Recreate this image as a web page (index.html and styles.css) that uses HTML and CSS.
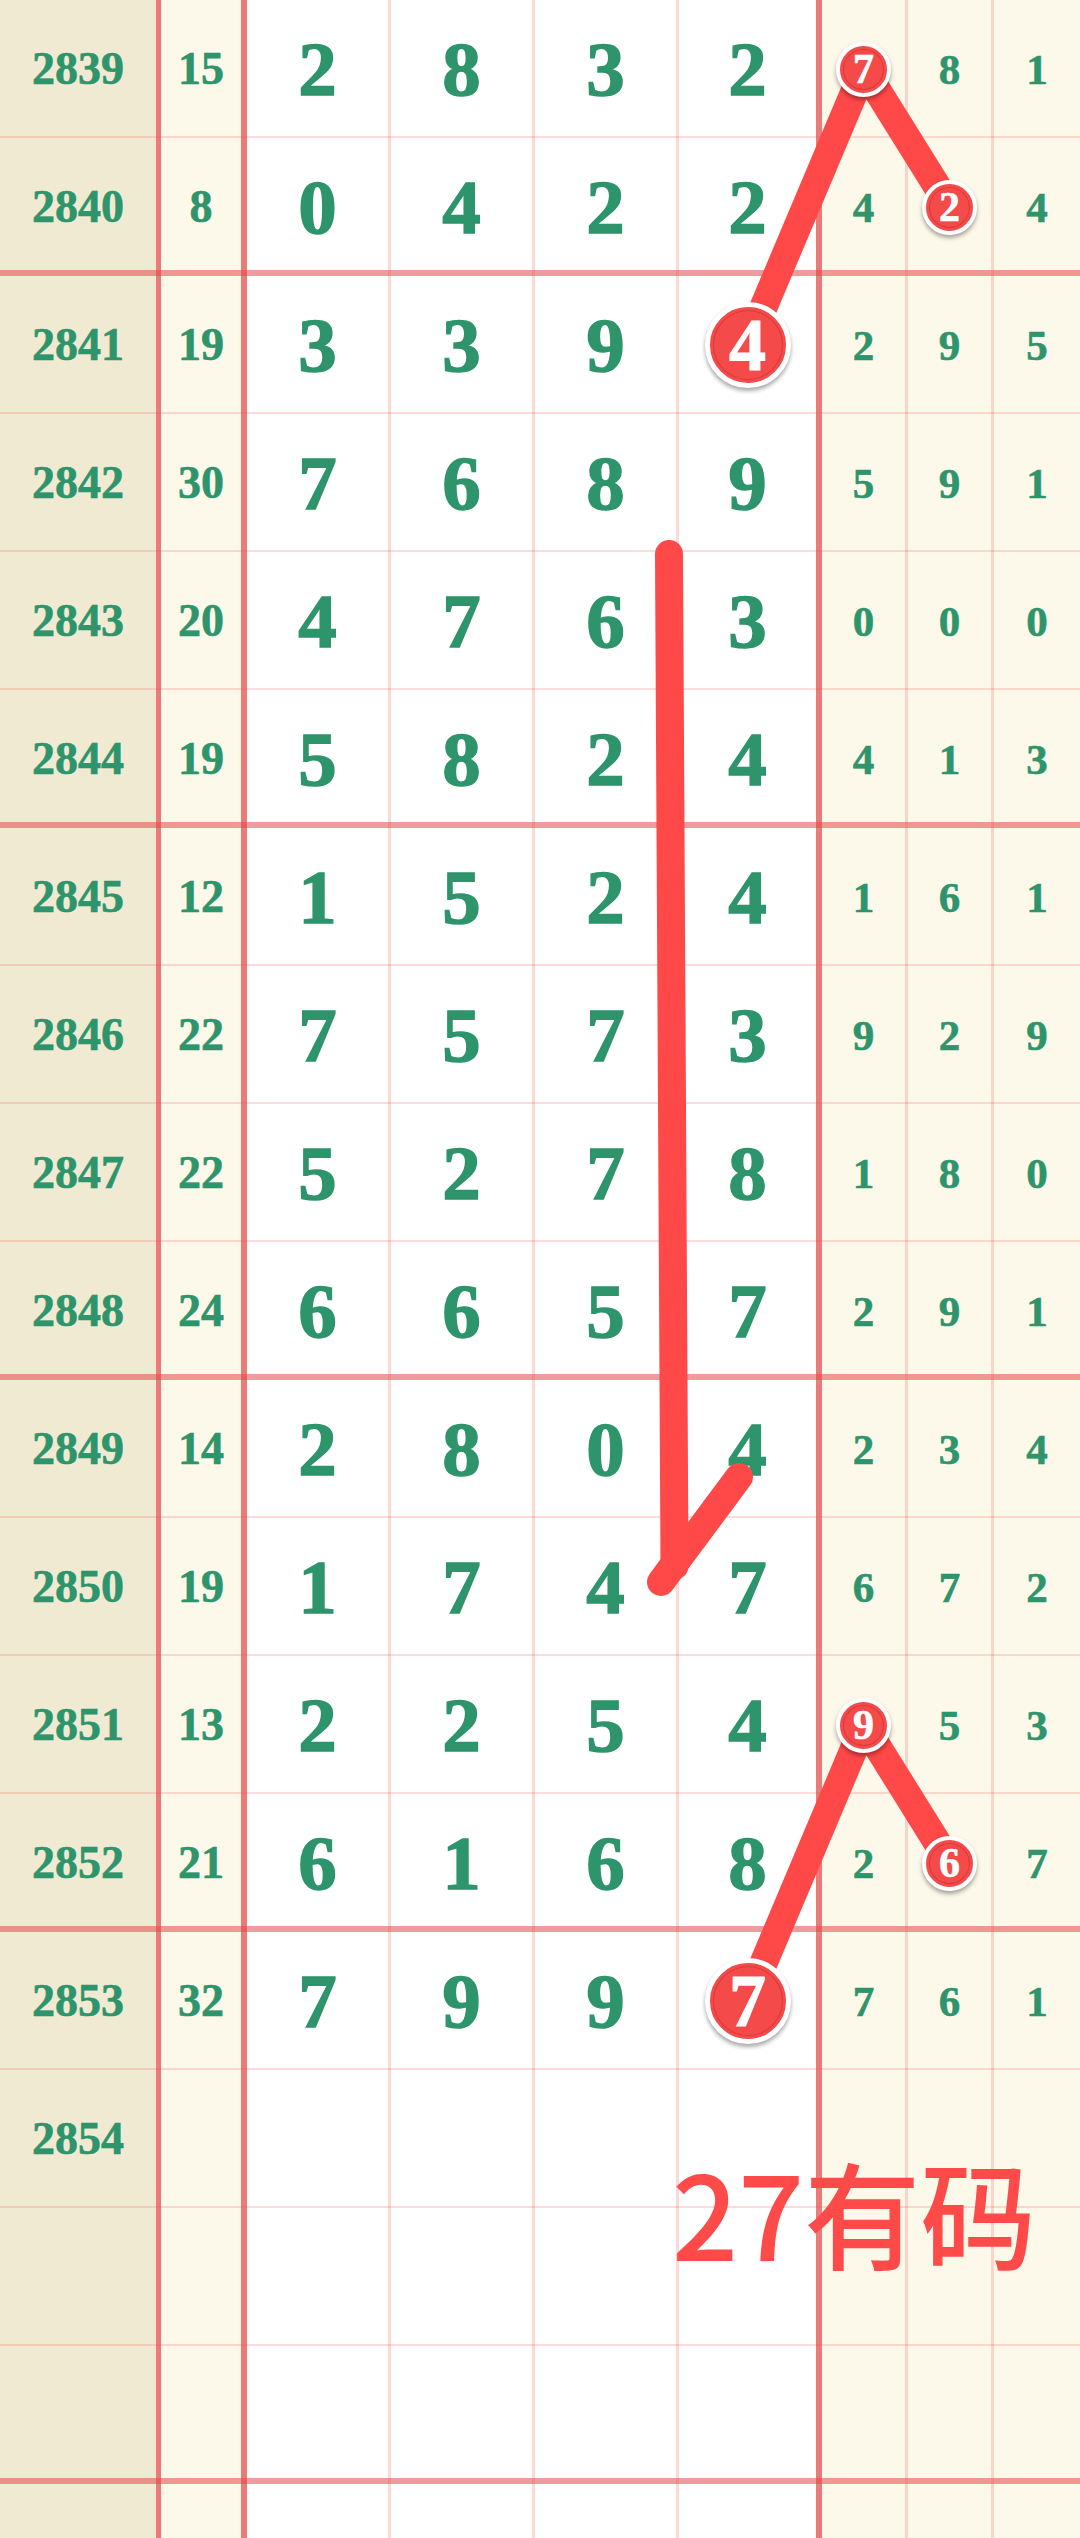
FILE: index.html
```html
<!DOCTYPE html>
<html lang="zh-CN">
<head>
    <meta charset="UTF-8">
    <meta name="viewport" content="width=device-width, initial-scale=1.0">
    <title>走势图</title>
    <link rel="stylesheet" href="styles.css">
</head>
<body>

    <div class="chart">
        <div class="table" id="table"></div>

        <svg class="trend" width="1080" height="2538" viewBox="0 0 1080 2538">
            <polyline points="747.5,345 864,69 950,207" />
            <polyline points="747.5,2001 864,1725 950,1863" />
            <path class="hand" d="M669 554 L674.5 1566" />
            <path class="hand" d="M661 1582 L739 1477" />
        </svg>

        <div class="note">27有码</div>
    </div>

    <script>
        // issue, sum, four main digits, three tail digits
        let draws = [
            ["2839", "15", "2832", "781"],
            ["2840", "8", "0422", "424"],
            ["2841", "19", "3394", "295"],
            ["2842", "30", "7689", "591"],
            ["2843", "20", "4763", "000"],
            ["2844", "19", "5824", "413"],
            ["2845", "12", "1524", "161"],
            ["2846", "22", "7573", "929"],
            ["2847", "22", "5278", "180"],
            ["2848", "24", "6657", "291"],
            ["2849", "14", "2804", "234"],
            ["2850", "19", "1747", "672"],
            ["2851", "13", "2254", "953"],
            ["2852", "21", "6168", "267"],
            ["2853", "32", "7997", "761"],
            ["2854", "", "", ""],
            ["", "", "", ""],
            ["", "", "", ""],
            ["", "", "", ""]
        ];

        // circled numbers: "row-col"
        let balls = { "0-6": "ball", "1-7": "ball", "2-5": "ball big", "12-6": "ball", "13-7": "ball", "14-5": "ball big" };

        let table = document.getElementById("table");

        draws.forEach(function(draw, i) {
            let row = document.createElement("div");
            row.className = i % 4 === 1 ? "row group-end" : "row";

            let main = draw[2] ? draw[2].split("") : ["", "", "", ""];
            let tail = draw[3] ? draw[3].split("") : ["", "", ""];
            let values = [draw[0], draw[1]].concat(main, tail);

            values.forEach(function(value, j) {
                let cell = document.createElement("div");
                if (j === 0) cell.className = "cell issue";
                else if (j === 1) cell.className = "cell sum";
                else if (j < 6) cell.className = j === 5 ? "cell num last" : "cell num";
                else cell.className = "cell tail";

                let ball = balls[i + "-" + j];
                if (ball) {
                    let span = document.createElement("span");
                    span.className = ball;
                    span.textContent = value;
                    cell.appendChild(span);
                } else {
                    cell.textContent = value;
                }
                row.appendChild(cell);
            });

            table.appendChild(row);
        });
    </script>

</body>
</html>
```

FILE: styles.css
```css
body {
    margin: 0;
    background: #ffffff;
    font-family: "Liberation Serif", "Times New Roman", serif;
    overflow: hidden;
}

.chart {
    position: relative;
    width: 1080px;
    height: 2538px;
    overflow: hidden;
}

.row {
    position: relative;
    display: grid;
    grid-template-columns: 161px 86px 144px 144px 144px 143px 86px 86px 86px;
    height: 138px;
}

/* row separators */
.row::after {
    content: "";
    position: absolute;
    left: 0;
    right: 0;
    bottom: -1px;
    height: 3px;
    background: rgba(235, 80, 80, 0.2);
}

.row.group-end::after {
    bottom: 0;
    height: 6px;
    background: rgba(228, 72, 72, 0.55);
}

.cell {
    display: flex;
    align-items: center;
    justify-content: center;
    line-height: 1;
    color: #2d946b;
    font-weight: bold;
    -webkit-text-stroke: 0.6px #2d946b;
    border-right: 3px solid rgba(235, 80, 80, 0.22);
}

.cell.issue {
    background: #f1ead3;
    border-right: 5px solid #eb7a78;
    font-size: 46px;
}

.cell.sum {
    background: #fdf9ea;
    border-right: 6px solid #eb7a78;
    font-size: 46px;
}

.cell.num {
    background: #ffffff;
    font-size: 77px;
    -webkit-text-stroke: 1.4px #2d946b;
}

.cell.num.last {
    border-right: 6px solid #eb7a78;
}

.cell.tail {
    background: #fdf9ea;
    font-size: 43px;
}

.cell.tail:last-child {
    border-right: none;
}

.ball {
    position: relative;
    z-index: 2;
    display: flex;
    align-items: center;
    justify-content: center;
    width: 47px;
    height: 47px;
    border: 4px solid #ffffff;
    border-radius: 50%;
    background: #f44a4a;
    color: #ffffff;
    -webkit-text-stroke: 0.6px #ffffff;
    font-size: 42px;
    box-shadow: inset 0 0 0 3px #f44a4a, inset 0 0 0 4px #d93a3a, 0 3px 4px rgba(0, 0, 0, 0.35);
}

.ball.big {
    width: 76px;
    height: 76px;
    border-width: 5px;
    font-size: 74px;
    -webkit-text-stroke: 1.2px #ffffff;
}

.trend {
    position: absolute;
    left: 0;
    top: 0;
    z-index: 1;
    pointer-events: none;
}

.trend polyline,
.trend path {
    fill: none;
    stroke: #ff4848;
    stroke-width: 28;
    stroke-linejoin: round;
}

.trend .hand {
    stroke-linecap: round;
}

.note {
    position: absolute;
    left: 672px;
    top: 2152px;
    z-index: 3;
    font-family: "Noto Sans CJK SC", sans-serif;
    font-size: 116px;
    font-weight: 500;
    line-height: 1;
    color: #ff4a4a;
}
```
